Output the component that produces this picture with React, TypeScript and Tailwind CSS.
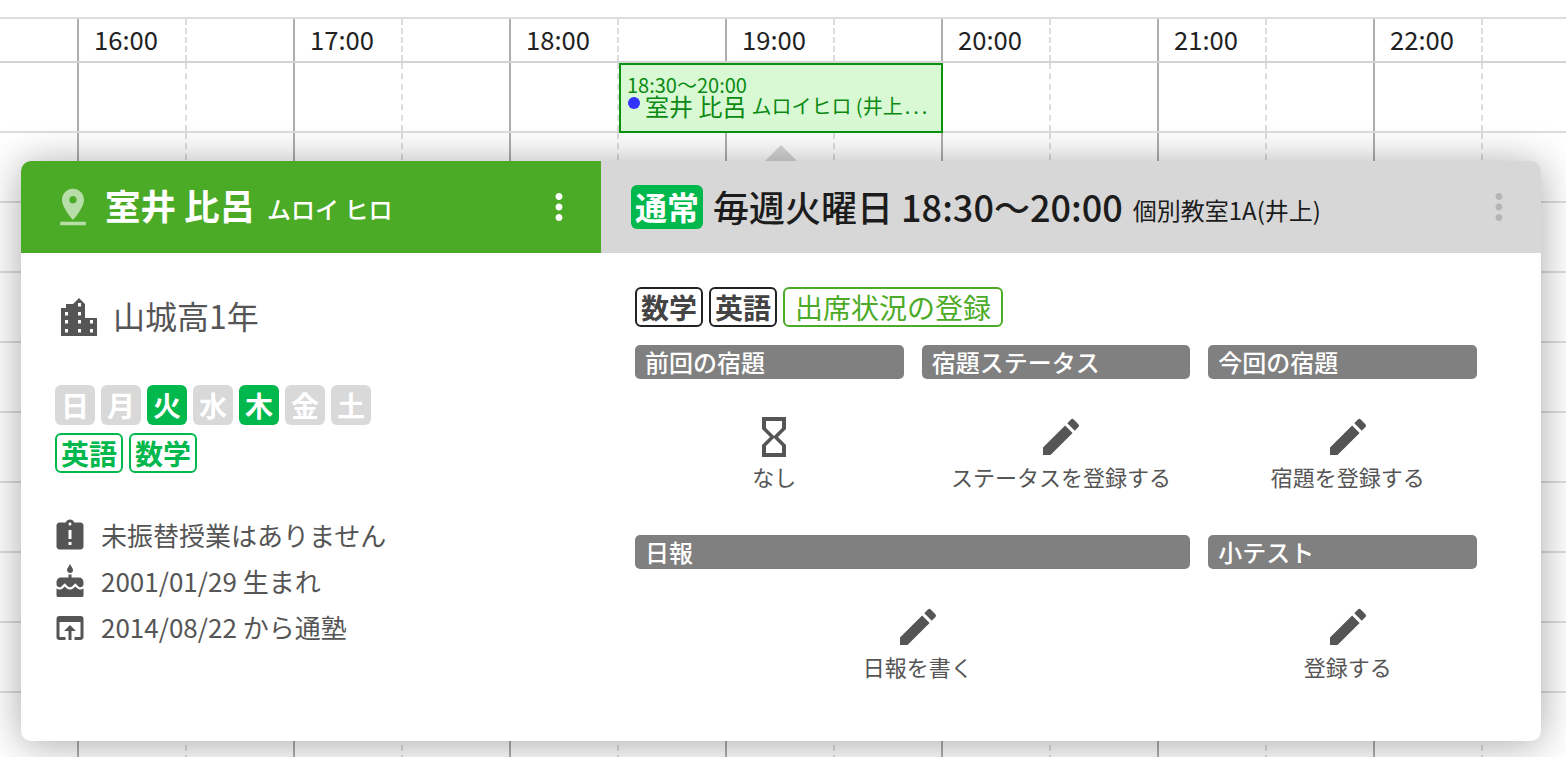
import { MdAssignmentLate, MdCake, MdEdit, MdHourglassEmpty, MdMoreVert, MdOpenInBrowser, MdPinDrop } from 'react-icons/md';

const hours = ['16:00', '17:00', '18:00', '19:00', '20:00', '21:00', '22:00'];
const days = [
  { label: '日', on: false },
  { label: '月', on: false },
  { label: '火', on: true },
  { label: '水', on: false },
  { label: '木', on: true },
  { label: '金', on: false },
  { label: '土', on: false },
];

function GridRow({ height, first, labels }: { height: string; first?: boolean; labels?: boolean }) {
  return (
    <div className={`flex border-t-2 ${height} ${first ? 'border-[#dddddd]' : 'border-[#d4d4d4]'}`}>
      <div className="w-[77px] shrink-0" />
      {hours.map((hour) => (
        <div key={hour} className="flex shrink-0">
          <div className="w-[108px] border-l-2 border-[#aeaeae] pl-[15px] text-[25.6px] leading-[39px] text-[#222222]">
            {labels ? hour : ''}
          </div>
          <div className="w-[108px] border-l-2 border-dashed border-[#dddddd]" />
        </div>
      ))}
    </div>
  );
}

function SectionBar({ title, className }: { title: string; className?: string }) {
  return (
    <div className={`h-[34px] rounded-[5px] bg-[#808080] px-[10px] text-[24px] font-medium leading-[33px] text-white ${className ?? ''}`}>
      {title}
    </div>
  );
}

function Action({ label, none }: { label: string; none?: boolean }) {
  return (
    <div className="flex flex-col items-center pl-[10px]">
      {none ? <MdHourglassEmpty size={48} className="text-[#555555]" /> : <MdEdit size={48} className="text-[#555555]" />}
      <div className="text-[22px] leading-[30px] text-[#555555]">{label}</div>
    </div>
  );
}

function BuildingIcon() {
  return (
    <svg width="36" height="38" viewBox="0 0 36 38" className="shrink-0">
      <path
        fillRule="evenodd"
        fill="#555555"
        d="M0 38V10h5V6h7l6-6 6 6v14h12v18H0zM17 5v3.500h3V5h-3zM4 14v3.500h3V14H4zm13 0v3.500h3V14h-3zM4 22v3.500h3V22H4zm13 0v3.500h3V22h-3zm12 0v3.500h3V22h-3zM4 31v3.500h3V31H4zm13 0v3.500h3V31h-3zm12 0v3.500h3V31h-3z"
      />
    </svg>
  );
}

export default function App() {
  return (
    <div className="relative h-[757px] w-full overflow-hidden bg-white pt-[17px] [font-family:'Noto_Sans_CJK_JP',sans-serif]">
      {/* Timetable */}
      <GridRow height="h-[44px]" first labels />
      <GridRow height="h-[70px]" />
      {[0, 1, 2, 3, 4, 5, 6, 7, 8].map((row) => (
        <GridRow key={row} height="h-[70px]" first />
      ))}

      {/* Lesson block */}
      <div className="absolute left-[619px] top-[63px] h-[70px] w-[324px] overflow-hidden border-2 border-[#0a930f] bg-[#d9f9d4] pl-[6px] pt-[11px] text-[#0a8a12]">
        <div className="text-[20px] leading-[18px]">18:30〜20:00</div>
        <div className="ml-[1px] mt-[1px] flex items-center whitespace-nowrap leading-[22px]">
          <span className="mr-[5px] h-[12px] w-[12px] shrink-0 -translate-y-[3px] rounded-full bg-[#3333ff]" />
          <span className="text-[24px]">室井 比呂</span>
          <span className="ml-[5px] text-[20px]">ムロイヒロ (井上<span className="ml-[2px] tracking-[3px]">...</span></span>
        </div>
      </div>

      {/* Popover */}
      <div className="absolute left-[765px] top-[145px] h-0 w-0 border-x-[16px] border-b-[16px] border-x-transparent border-b-[#d7d7d7]" />
      <div className="absolute left-[21px] top-[161px] flex h-[580px] w-[1520px] flex-col overflow-hidden rounded-[10px] bg-white shadow-[0_3px_40px_rgba(0,0,0,0.35)]">
        <div className="flex h-[92px] shrink-0">
          <div className="flex w-[580px] shrink-0 items-center bg-[#4cab26] pl-[30px] text-white">
            <MdPinDrop size={44} className="shrink-0 opacity-60" />
            <span className="-mt-[4px] ml-[10px] text-[35.500px] font-bold leading-none">室井 比呂</span>
            <span className="ml-[12px] mt-[4px] text-[24px] font-medium leading-none">ムロイ ヒロ</span>
            <MdMoreVert size={42} className="ml-auto mr-[21px] shrink-0" />
          </div>
          <div className="flex flex-1 items-center bg-[#d7d7d7] pl-[30px] text-[#1c1c1c]">
            <span className="h-[44px] w-[72px] rounded-[6px] bg-[#00b84c] text-center text-[32px] font-bold leading-[43px] text-white">通常</span>
            <span className="-mt-[2px] ml-[10px] text-[36px] font-medium leading-none">毎週火曜日 18:30〜20:00</span>
            <span className="ml-[10px] mt-[5px] text-[24px] leading-none">個別教室1A(井上)</span>
            <MdMoreVert size={42} className="ml-auto mr-[21px] shrink-0 text-[#b5b5b5]" />
          </div>
        </div>

        <div className="flex flex-1">
          {/* Student */}
          <div className="w-[580px] shrink-0 pl-[34px] pt-[44px] text-[#555555]">
            <div className="flex h-[40px] items-center pl-[6px]">
              <BuildingIcon />
              <span className="-mt-[4px] ml-[16px] text-[32px] leading-none">山城高1年</span>
            </div>
            <div className="mt-[48px] flex gap-[6px]">
              {days.map((day) => (
                <span
                  key={day.label}
                  className={`h-[40px] w-[40px] rounded-[6px] text-center text-[28px] font-bold leading-[40px] text-white ${day.on ? 'bg-[#00b84c]' : 'bg-[#d9d9d9]'}`}
                >
                  {day.label}
                </span>
              ))}
            </div>
            <div className="mt-[8px] flex gap-[6px]">
              {['英語', '数学'].map((subject) => (
                <span key={subject} className="h-[40px] rounded-[6px] border-2 border-[#00b84c] px-[4px] text-[28px] font-bold leading-[36px] text-[#00b84c]">
                  {subject}
                </span>
              ))}
            </div>
            <div className="-ml-[3px] mt-[40px] flex flex-col text-[26px]">
              <div className="flex h-[46px] items-center">
                <MdAssignmentLate size={36} className="shrink-0" />
                <span className="-mt-[2px] ml-[13px] leading-none">未振替授業はありません</span>
              </div>
              <div className="flex h-[46px] items-center">
                <MdCake size={36} className="shrink-0" />
                <span className="-mt-[2px] ml-[13px] leading-none">2001/01/29 生まれ</span>
              </div>
              <div className="flex h-[46px] items-center">
                <MdOpenInBrowser size={36} className="shrink-0" />
                <span className="-mt-[2px] ml-[13px] leading-none">2014/08/22 から通塾</span>
              </div>
            </div>
          </div>

          {/* Lesson */}
          <div className="flex-1 pl-[34px] pt-[34px]">
            <div className="flex h-[40px] gap-[6px] text-[28px]">
              <span className="rounded-[6px] border-2 border-[#222222] px-[4px] font-bold leading-[37px] text-[#444444]">数学</span>
              <span className="rounded-[6px] border-2 border-[#222222] px-[4px] font-bold leading-[37px] text-[#444444]">英語</span>
              <span className="rounded-[6px] border-2 border-[#4cab26] px-[10px] leading-[37px] text-[#4cab26]">出席状況の登録</span>
            </div>
            <div className="mt-[18px] grid w-[842px] grid-cols-3 gap-x-[18px]">
              <SectionBar title="前回の宿題" />
              <SectionBar title="宿題ステータス" />
              <SectionBar title="今回の宿題" />
              <div className="col-span-3 mt-[34px] grid grid-cols-3 gap-x-[18px]">
                <Action label="なし" none />
                <Action label="ステータスを登録する" />
                <Action label="宿題を登録する" />
              </div>
              <SectionBar title="日報" className="col-span-2 mt-[44px]" />
              <SectionBar title="小テスト" className="mt-[44px]" />
              <div className="col-span-2 mt-[34px]">
                <Action label="日報を書く" />
              </div>
              <div className="mt-[34px]">
                <Action label="登録する" />
              </div>
            </div>
          </div>
        </div>
      </div>
    </div>
  );
}
